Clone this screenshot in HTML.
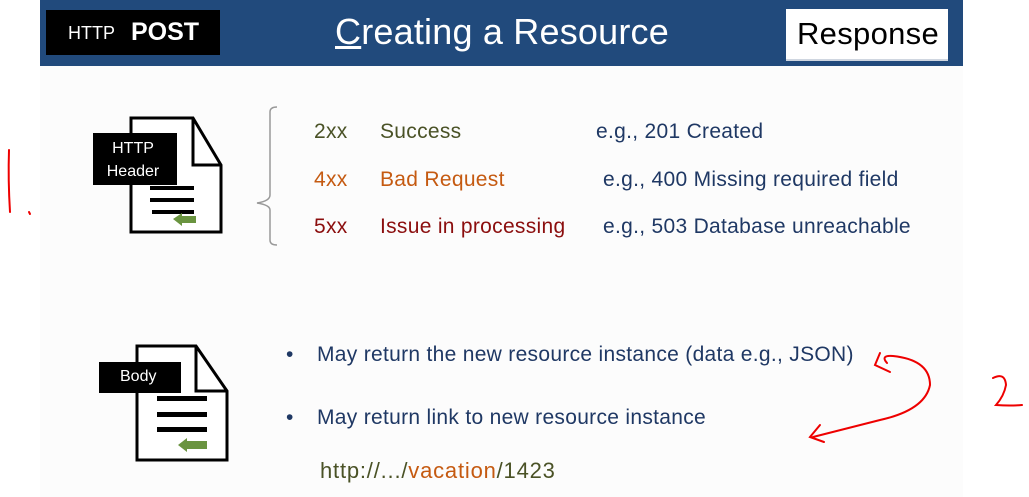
<!DOCTYPE html>
<html><head><style>
body{margin:0;width:1029px;height:497px;background:#fff;position:relative;overflow:hidden;font-family:"Liberation Sans",sans-serif}
.a{position:absolute;white-space:nowrap}
.t{font-size:21px;letter-spacing:0.3px}
</style></head><body>
<div class="a" style="left:40px;top:66px;width:923px;height:431px;background:#fcfcfc"></div>
<div class="a" style="left:40px;top:0;width:923px;height:66px;background:#214a7c"></div>
<div class="a" style="left:46px;top:10px;width:174px;height:45px;background:#000;color:#fff"><span class="a" style="left:22px;top:13px;font-size:18px">HTTP</span><span class="a" style="left:85px;top:8px;font-size:25px;font-weight:bold">POST</span></div>
<div class="a" style="left:335px;top:11px;font-size:36px;color:#fff;letter-spacing:0.2px"><u>C</u>reating a Resource</div>
<div class="a" style="left:786px;top:9px;width:162px;height:50px;background:#fff;border-bottom:2px solid #cfd6e0"><span class="a" style="left:11px;top:7px;font-size:31px;color:#000;letter-spacing:0.3px">Response</span></div>

<svg class="a" style="left:0;top:0" width="1029" height="497">
<g fill="#fff" stroke="#000" stroke-width="3">
<path d="M131 118 H193 L221 165 V232 H131 Z"/>
<path d="M193 118 V165 H221" fill="none"/>
<path d="M137 346 H196 L227 391 V460 H137 Z"/>
<path d="M196 346 V391 H227" fill="none"/>
</g>
<g fill="#000">
<rect x="93" y="133" width="84" height="52"/>
<rect x="150" y="186" width="44" height="4"/>
<rect x="150" y="198" width="44" height="4"/>
<rect x="152" y="210" width="42" height="4"/>
<rect x="99" y="362" width="82" height="31"/>
<rect x="157" y="396" width="50" height="5"/>
<rect x="157" y="412" width="50" height="5"/>
<rect x="157" y="427" width="50" height="5"/>
</g>
<g fill="#6a9440"><path d="M173 219 L182 213 V216 H196 V223 H182 V226 Z"/><path d="M178 445 L187 438 V441 H207 V449 H187 V452 Z"/></g>
<path d="M277 107 Q270 107 270 112 V195 Q270 201 257 203 Q270 205 270 210 V240 Q270 245 277 245" fill="none" stroke="#999" stroke-width="1.5"/>
<g fill="none" stroke="#e00" stroke-width="2" stroke-linecap="round">
<path d="M9 150 Q8 180 10 212"/><path d="M29 212 L30 214"/>
<path d="M887 363 Q880 355 893 356 Q930 360 930 385 Q925 410 880 420 Q840 430 813 437"/>
<path d="M880 353 L875 365 L890 372"/><path d="M820 425 L810 437 L824 442"/>
<path d="M993 378 Q1005 372 1006 385 Q1004 396 996 405 Q1010 406 1022 405"/>
</g>
</svg>
<div class="a" style="left:95px;top:137px;width:76px;text-align:center;color:#fff;font-size:16px;line-height:23px">HTTP<br>Header</div>
<div class="a" style="left:120px;top:368px;color:#fff;font-size:16px">Body</div>

<div class="a t" style="left:314px;top:120px;color:#4a5226">2xx</div>
<div class="a t" style="left:380px;top:120px;color:#4a5226">Success</div>
<div class="a t" style="left:596px;top:120px;color:#1f3864">e.g., 201 Created</div>
<div class="a t" style="left:314px;top:168px;color:#c55a11">4xx</div>
<div class="a t" style="left:380px;top:168px;color:#c55a11">Bad Request</div>
<div class="a t" style="left:603px;top:168px;color:#1f3864">e.g., 400 Missing required field</div>
<div class="a t" style="left:314px;top:215px;color:#8b0e0e">5xx</div>
<div class="a t" style="left:380px;top:215px;color:#8b0e0e">Issue in processing</div>
<div class="a t" style="left:603px;top:215px;color:#1f3864">e.g., 503 Database unreachable</div>

<div class="a t" style="left:286px;top:343px;color:#1f3864">•</div>
<div class="a t" style="left:317px;top:343px;color:#1f3864">May return the new resource instance (data e.g., JSON)</div>
<div class="a t" style="left:286px;top:406px;color:#1f3864">•</div>
<div class="a t" style="left:317px;top:406px;color:#1f3864">May return link to new resource instance</div>
<div class="a" style="left:320px;top:458px;font-size:22px;letter-spacing:0.8px;color:#4a5226">http://.../<span style="color:#c55a11">vacation</span>/1423</div>
</body></html>
